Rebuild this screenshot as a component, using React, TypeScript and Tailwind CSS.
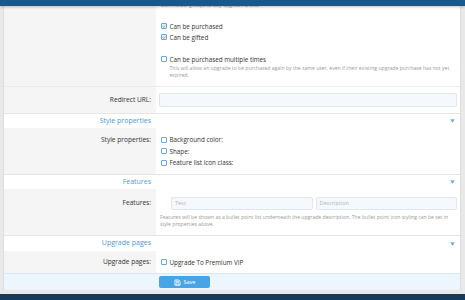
import React from "react";

const Box = ({ checked = false }: { checked?: boolean }) => (
  <span className={`inline-flex h-[6px] w-[6px] shrink-0 items-center justify-center rounded-[1px] border border-[#6ea6d6] ${checked ? "bg-[#dcecf9]" : "bg-white"}`}>
    {checked && (
      <svg viewBox="0 0 6 6" className="h-[5px] w-[5px]">
        <path d="M1 3.1 L2.4 4.4 L5 1.4" fill="none" stroke="#3b86c8" strokeWidth="0.9" />
      </svg>
    )}
  </span>
);

const Check = ({ label, checked = false, lh = "leading-[11px]" }: { label: string; checked?: boolean; lh?: string }) => (
  <div className={`flex items-center gap-[2.5px] ${lh}`}>
    <Box checked={checked} />
    <span>{label}</span>
  </div>
);

const Caret = () => (
  <svg viewBox="0 0 6 5" className="h-[4px] w-[5px]">
    <rect x="0.5" y="0" width="5" height="0.8" fill="#5a9fd8" />
    <path d="M0.5 1.6 L5.5 1.6 L3 4.4 Z" fill="#5a9fd8" />
  </svg>
);

const Header = ({ title, h }: { title: string; h: string }) => (
  <div className={`flex ${h} items-center border-t border-[#e6e6e6] bg-white`}>
    <div className="w-[152px] pr-[5px] text-right text-[7px] text-[#4a9ad8]">{title}</div>
    <div className="flex flex-1 justify-end pr-[5px]">
      <Caret />
    </div>
  </div>
);

export default function App() {
  return (
    <div className="relative h-[300px] w-[465px] overflow-hidden bg-[#e9e9e9] font-['Open_Sans','Noto_Sans',sans-serif] text-[6.3px] text-[#333333]">
      <div className="absolute inset-x-0 top-0 z-10 h-[6px] bg-[#1b5886] shadow-[0_1px_3px_rgba(0,0,0,0.25)]" />
      <div className="flex h-[294px] flex-col">
        <div className="ml-[3px] mr-[4px] flex h-[290px] flex-col border-x border-[#dddddd] bg-white">
          {/* row 1 */}
          <div className="flex h-[86px]">
            <div className="w-[152px] bg-[#f5f5f5]" />
            <div className="flex-1 pl-[5px] pt-[1px]">
              <div className="text-[5.1px] leading-[8px] text-[#9a9a9a]">Don't allow groups to buy upgrade &amp; also</div>
              <div className="mt-[11.5px]">
                <Check label="Can be purchased" checked />
                <Check label="Can be gifted" checked />
              </div>
              <div className="mt-[11px]">
                <Check label="Can be purchased multiple times" />
                <div className="pl-[8.5px] text-[5.1px] leading-[7px] text-[#9a9a9a]">
                  This will allow an upgrade to be purchased again by the same user, even if their existing upgrade purchase has not yet expired.
                </div>
              </div>
            </div>
          </div>
          {/* redirect */}
          <div className="flex h-[27px] border-t border-[#ececec]">
            <div className="flex w-[152px] items-center justify-end bg-[#f5f5f5] pr-[5px] text-[6.6px]">Redirect URL:</div>
            <div className="flex flex-1 items-center px-[3px]">
              <div className="h-[14px] w-full rounded-[2px] border border-[#dfe7ef] bg-[#f5f9fd]" />
            </div>
          </div>
          <Header title="Style properties" h="h-[15px]" />
          {/* style props */}
          <div className="flex h-[46px]">
            <div className="w-[152px] bg-[#f5f5f5] pr-[5px] pt-[6px] text-right text-[6.6px] leading-[11.5px]">Style properties:</div>
            <div className="flex-1 pl-[5px] pt-[6px]">
              <Check label="Background color:" lh="leading-[11.5px]" />
              <Check label="Shape:" lh="leading-[11.5px]" />
              <Check label="Feature list icon class:" lh="leading-[11.5px]" />
            </div>
          </div>
          <Header title="Features" h="h-[15px]" />
          {/* features */}
          <div className="flex h-[46px]">
            <div className="w-[152px] bg-[#f5f5f5] pr-[5px] pt-[10px] text-right text-[6.6px] leading-[8px]">Features:</div>
            <div className="flex-1 pl-[4px] pr-[3px] pt-[8px]">
              <div className="flex gap-[3px] pl-[11px]">
                <div className="flex h-[13px] flex-1 items-center rounded-[2px] border border-[#dfe7ef] bg-[#f5f9fd] pl-[3px] text-[5.5px] text-[#b4b4b4]">Text</div>
                <div className="flex h-[13px] flex-1 items-center rounded-[2px] border border-[#dfe7ef] bg-[#f5f9fd] pl-[3px] text-[5.5px] text-[#b4b4b4]">Description</div>
              </div>
              <div className="mt-[4px] text-[5.1px] leading-[7px] text-[#9a9a9a]">
                Features will be shown as a bullet point list underneath the upgrade description. The bullet point icon styling can be set in style properties above.
              </div>
            </div>
          </div>
          <Header title="Upgrade pages" h="h-[16px]" />
          {/* upgrade pages */}
          <div className="flex h-[22px]">
            <div className="flex w-[152px] items-center justify-end bg-[#f5f5f5] pr-[5px] text-[6.6px]">Upgrade pages:</div>
            <div className="flex flex-1 items-center pl-[5px]">
              <Check label="Upgrade To Premium VIP" />
            </div>
          </div>
          {/* footer */}
          <div className="flex h-[17px] items-center border-t border-[#dbe6f0] bg-[#edf6fd] pl-[155px]">
            <button className="flex h-[12px] w-[51px] items-center justify-center gap-[3px] rounded-[2px] bg-[#47a5e6] text-[5.5px] text-white">
              <svg viewBox="0 0 24 24" className="h-[7px] w-[7px]" fill="none" stroke="white" strokeWidth="2.5">
                <path d="M5 3h11l5 5v13H3V3z" />
                <path d="M7 3v6h8V3" />
                <rect x="7" y="13" width="10" height="8" />
              </svg>
              <span>Save</span>
            </button>
          </div>
        </div>
      </div>
      <div className="h-[6px] bg-[#183b5b]" />
    </div>
  );
}
